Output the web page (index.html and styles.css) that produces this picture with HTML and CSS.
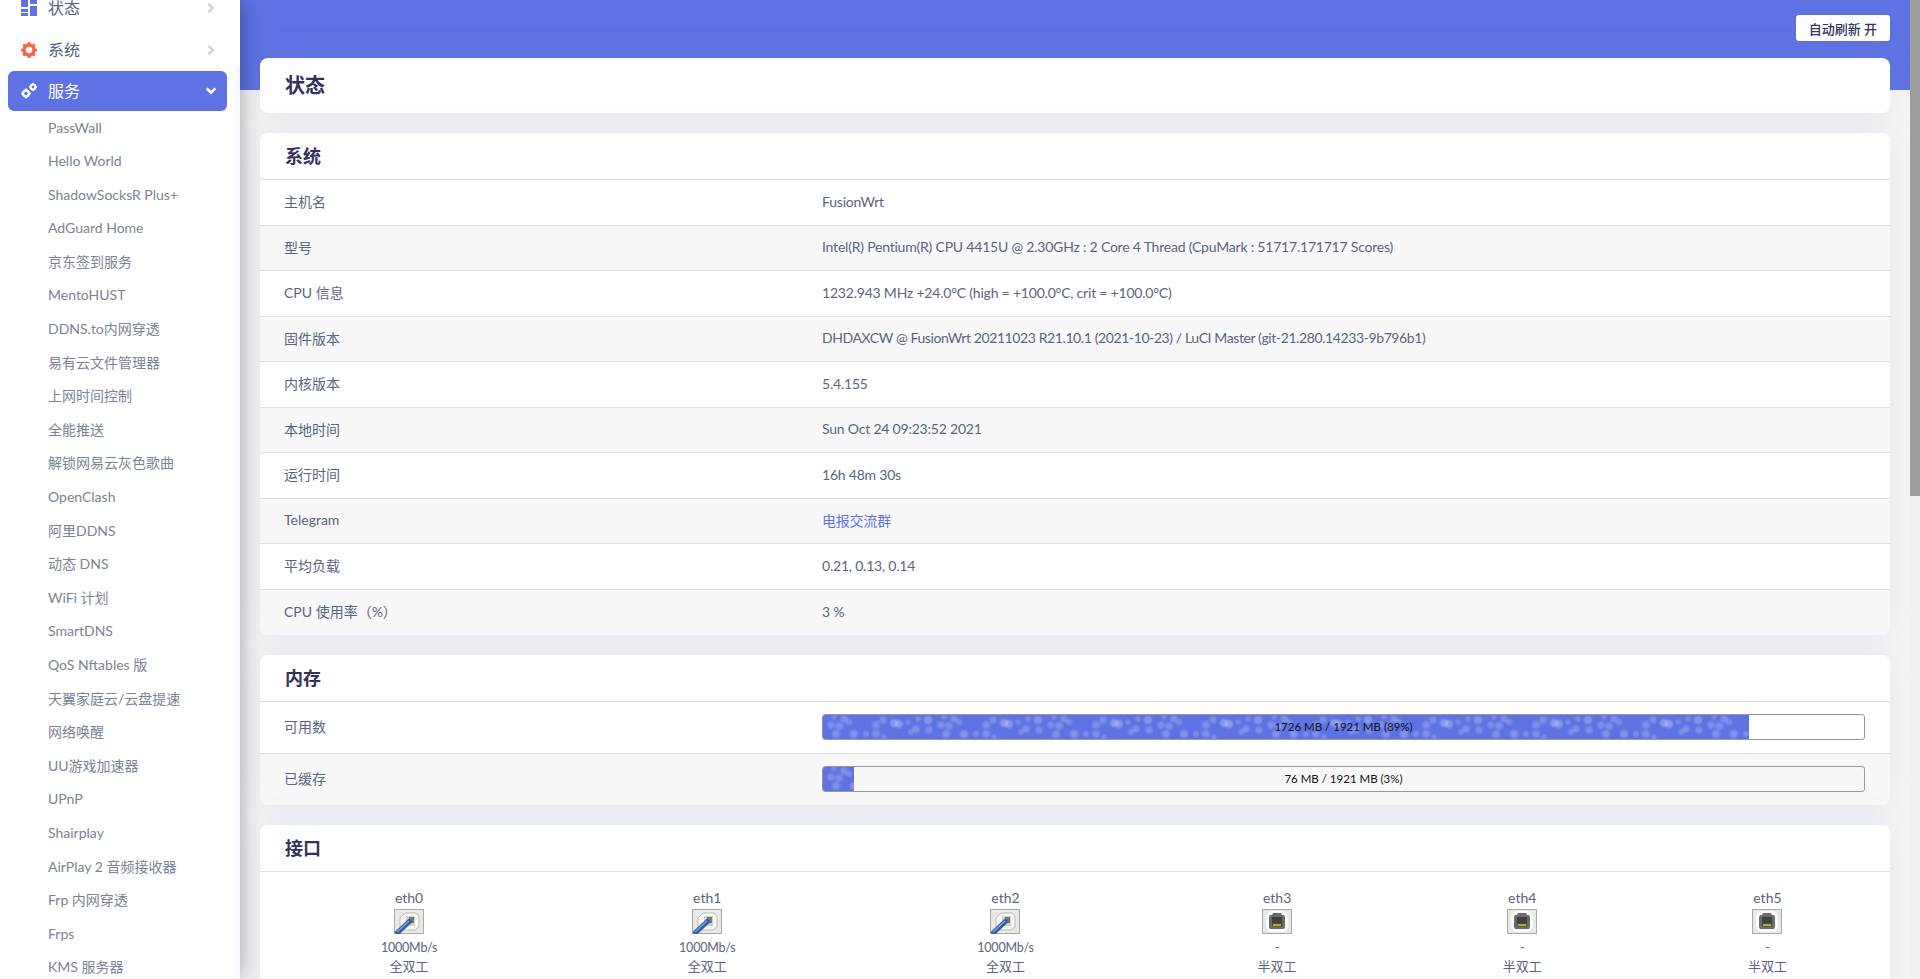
FILE: index.html
```html
<!DOCTYPE html>
<html lang="zh-CN">
<head>
    <meta charset="UTF-8">
    <title>状态 - LuCI</title>
    <link rel="stylesheet" href="styles.css">
</head>
<body>
    <aside class="sidebar">
        <ul class="menu">
            <li class="menu-item">
                <svg class="menu-icon" viewBox="0 0 16 16"><path fill="#5e72e4" d="M0 0h7v7H0zM9 0h7v4H9zM9 6h7v10H9zM0 9h7v3H0zM0 13h7v3H0z"/></svg>
                <span>状态</span>
                <svg class="arrow" viewBox="0 0 10 14"><path d="M2 2l5 5-5 5" fill="none" stroke="#ced4da" stroke-width="3"/></svg>
            </li>
            <li class="menu-item">
                <svg class="menu-icon" viewBox="0 0 16 16"><circle cx="8" cy="8" r="5" fill="none" stroke="#fb6340" stroke-width="3.4"/><path stroke="#fb6340" stroke-width="2.6" d="M8 0v3M8 13v3M0 8h3M13 8h3M2.300 2.300l2 2M11.700 11.700l2 2M2.300 13.700l2-2M11.700 4.300l2-2"/></svg>
                <span>系统</span>
                <svg class="arrow" viewBox="0 0 10 14"><path d="M2 2l5 5-5 5" fill="none" stroke="#ced4da" stroke-width="3"/></svg>
            </li>
            <li class="menu-item active">
                <svg class="menu-icon" viewBox="0 0 16 16"><circle cx="5" cy="10.500" r="3" fill="none" stroke="#fff" stroke-width="2.400"/><circle cx="12" cy="4" r="2.400" fill="none" stroke="#fff" stroke-width="2"/><path stroke="#fff" stroke-width="1.600" d="M5 5.500v2M5 13.500v2M0 10.500h2M8 10.500h2M12 0v1.500M12 6.500v1.500M8 4h1.500M14.500 4H16"/></svg>
                <span>服务</span>
                <svg class="arrow" viewBox="0 0 14 10"><path d="M2 2l5 5 5-5" fill="none" stroke="#fff" stroke-width="3"/></svg>
            </li>
        </ul>
        <ul class="submenu">
            <li>PassWall</li>
            <li>Hello World</li>
            <li>ShadowSocksR Plus+</li>
            <li>AdGuard Home</li>
            <li>京东签到服务</li>
            <li>MentoHUST</li>
            <li>DDNS.to内网穿透</li>
            <li>易有云文件管理器</li>
            <li>上网时间控制</li>
            <li>全能推送</li>
            <li>解锁网易云灰色歌曲</li>
            <li>OpenClash</li>
            <li>阿里DDNS</li>
            <li>动态 DNS</li>
            <li>WiFi 计划</li>
            <li>SmartDNS</li>
            <li>QoS Nftables 版</li>
            <li>天翼家庭云/云盘提速</li>
            <li>网络唤醒</li>
            <li>UU游戏加速器</li>
            <li>UPnP</li>
            <li>Shairplay</li>
            <li>AirPlay 2 音频接收器</li>
            <li>Frp 内网穿透</li>
            <li>Frps</li>
            <li>KMS 服务器</li>
        </ul>
    </aside>

    <main class="main">
        <div class="topbar">
            <button class="refresh-btn">自动刷新 开</button>
        </div>

        <div class="card page-title"><h2>状态</h2></div>

        <section class="card">
            <h3>系统</h3>
            <div class="row"><div class="key">主机名</div><div class="value">FusionWrt</div></div>
            <div class="row"><div class="key">型号</div><div class="value">Intel(R) Pentium(R) CPU 4415U @ 2.30GHz : 2 Core 4 Thread (CpuMark : 51717.171717 Scores)</div></div>
            <div class="row"><div class="key">CPU 信息</div><div class="value">1232.943 MHz +24.0°C (high = +100.0°C, crit = +100.0°C)</div></div>
            <div class="row"><div class="key">固件版本</div><div class="value value-tight">DHDAXCW @ FusionWrt 20211023 R21.10.1 (2021-10-23) / LuCI Master (git-21.280.14233-9b796b1)</div></div>
            <div class="row"><div class="key">内核版本</div><div class="value">5.4.155</div></div>
            <div class="row"><div class="key">本地时间</div><div class="value">Sun Oct 24 09:23:52 2021</div></div>
            <div class="row"><div class="key">运行时间</div><div class="value">16h 48m 30s</div></div>
            <div class="row"><div class="key">Telegram</div><div class="value"><a class="link" href="#">电报交流群</a></div></div>
            <div class="row"><div class="key">平均负载</div><div class="value">0.21, 0.13, 0.14</div></div>
            <div class="row"><div class="key">CPU 使用率（%）</div><div class="value">3 %</div></div>
        </section>

        <section class="card">
            <h3>内存</h3>
            <div class="row row-bar"><div class="key">可用数</div><div class="bar"><div class="bar-fill" style="width: 89%"></div><span>1726 MB / 1921 MB (89%)</span></div></div>
            <div class="row row-bar"><div class="key">已缓存</div><div class="bar"><div class="bar-fill" style="width: 3%"></div><span>76 MB / 1921 MB (3%)</span></div></div>
        </section>

        <section class="card">
            <h3>接口</h3>
            <div class="ports">
                <div class="port">
                    <div>eth0</div>
                    <svg class="port-icon" viewBox="0 0 30 25"><use href="#port-up"/></svg>
                    <div class="speed">1000Mb/s</div>
                    <div class="duplex">全双工</div>
                </div>
                <div class="port">
                    <div>eth1</div>
                    <svg class="port-icon" viewBox="0 0 30 25"><use href="#port-up"/></svg>
                    <div class="speed">1000Mb/s</div>
                    <div class="duplex">全双工</div>
                </div>
                <div class="port">
                    <div>eth2</div>
                    <svg class="port-icon" viewBox="0 0 30 25"><use href="#port-up"/></svg>
                    <div class="speed">1000Mb/s</div>
                    <div class="duplex">全双工</div>
                </div>
                <div class="port">
                    <div>eth3</div>
                    <svg class="port-icon" viewBox="0 0 30 25"><use href="#port-down"/></svg>
                    <div class="speed">-</div>
                    <div class="duplex">半双工</div>
                </div>
                <div class="port">
                    <div>eth4</div>
                    <svg class="port-icon" viewBox="0 0 30 25"><use href="#port-down"/></svg>
                    <div class="speed">-</div>
                    <div class="duplex">半双工</div>
                </div>
                <div class="port">
                    <div>eth5</div>
                    <svg class="port-icon" viewBox="0 0 30 25"><use href="#port-down"/></svg>
                    <div class="speed">-</div>
                    <div class="duplex">半双工</div>
                </div>
            </div>
        </section>
    </main>

    <div class="scrollbar"><div class="scrollbar-thumb"></div></div>

    <svg class="defs" width="0" height="0">
        <defs>
            <symbol id="port-up" viewBox="0 0 30 25">
                <rect x="0.500" y="0.500" width="29" height="24" fill="#e8e8e4" stroke="#a8a8a8"/>
                <path d="M6 9l5-5h11l3 3v11l-4 3H9l-3-3z" fill="#f6f6f4" stroke="#bdbdb8"/>
                <path d="M12 7h9v10h-9z" fill="#d2d2cd"/>
                <path d="M15 8h5v6h-5z" fill="#77777a"/>
                <path d="M2 25L17 11" stroke="#2f5fa8" stroke-width="5" fill="none"/>
                <path d="M3 23L15 12" stroke="#86a8d8" stroke-width="1.200" fill="none"/>
            </symbol>
            <symbol id="port-down" viewBox="0 0 30 25">
                <rect x="0.500" y="0.500" width="29" height="24" fill="#e8e8e4" stroke="#a8a8a8"/>
                <rect x="4" y="2" width="22" height="21" rx="6" fill="#fbfbfa"/>
                <path d="M11 4h8l1 2h2l1 2v10l-1 2H8l-1-2V8l1-2h2z" fill="#6a6e6b"/>
                <path d="M10 8h10v6H10z" fill="#3f4240"/>
                <path d="M10 14h10v3.500H10z" fill="#4a4a3c"/>
                <path d="M11 15h8v2h-8z" fill="#c2a82a"/>
            </symbol>
        </defs>
    </svg>
</body>
</html>
```

FILE: styles.css
```css
html, body {
    margin: 0;
    height: 100%;
    overflow: hidden;
}

body {
    display: flex;
    font-family: "Lato", "Noto Sans CJK SC", sans-serif;
    font-size: 14px;
    color: #5a6580;
    background-color: #f4f5f7;
}

ul {
    list-style: none;
    margin: 0;
    padding: 0;
}

.sidebar {
    width: 240px;
    flex-shrink: 0;
    height: 100vh;
    overflow: hidden;
    background-color: #fff;
    box-shadow: 0 0 20px rgba(0, 0, 0, 0.35);
    position: relative;
    z-index: 2;
}

.sidebar::after {
    content: "";
    position: absolute;
    top: 65px;
    right: 0;
    bottom: 0;
    width: 5px;
    background-color: #f8f9fc;
}

.menu {
    margin-top: -12px;
    padding: 0 8px;
}

.menu-item {
    display: flex;
    align-items: center;
    height: 40px;
    margin-bottom: 1.5px;
    padding-left: 13px;
    width: 219px;
    box-sizing: border-box;
    border-radius: 6px;
    font-size: 16px;
    color: #525f7f;
}

.menu-item span {
    padding-bottom: 2px;
}

.menu-item.active {
    background-color: #5e72e4;
    color: #fff;
}

.menu-icon {
    width: 16px;
    height: 16px;
    margin-right: 11px;
}

.menu-item .arrow {
    width: 12px;
    height: 12px;
    margin-left: auto;
    margin-right: 10px;
}

.submenu {
    margin-top: -2px;
}

.submenu li {
    height: 33.6px;
    line-height: 33.6px;
    padding-left: 48px;
    font-size: 14px;
    color: #7a8494;
    white-space: nowrap;
}

.main {
    flex: 1;
    height: 100vh;
    overflow: hidden;
    box-sizing: border-box;
    padding: 15px 20px 0;
    background: linear-gradient(#5e72e4 90px, #f4f5f7 90px);
}

.scrollbar {
    width: 10px;
    flex-shrink: 0;
    background-color: #f1f1f1;
}

.scrollbar-thumb {
    height: 496px;
    background-color: #9e9e9e;
}

.topbar {
    display: flex;
    justify-content: flex-end;
    height: 43px;
}

.refresh-btn {
    height: 26px;
    padding: 0 13px;
    border: none;
    border-radius: 3px;
    background-color: #fff;
    color: #32325d;
    font-family: inherit;
    font-size: 13px;
    font-weight: 500;
}

.card {
    margin-bottom: 20px;
    background-color: #fff;
    border-radius: 8px;
    box-shadow: 0 0 32px rgba(136, 152, 170, 0.15);
    overflow: hidden;
}

.page-title {
    height: 55px;
    display: flex;
    align-items: center;
    padding-left: 25px;
}

.page-title h2 {
    margin: 0 0 2px;
    font-size: 20px;
    color: #32325d;
}

.card h3 {
    margin: 0;
    height: 47px;
    line-height: 46px;
    padding-left: 25px;
    font-size: 18px;
    color: #32325d;
    border-bottom: 1px solid #dee2e6;
    box-sizing: border-box;
}

.row {
    display: flex;
    align-items: center;
    height: 45.5px;
    box-sizing: border-box;
    padding: 0 25px 2px 24px;
    border-bottom: 1px solid #dee2e6;
}

.row:nth-of-type(even) {
    background-color: #f8f8f8;
}

.row:last-child {
    border-bottom: none;
}

.key {
    flex-shrink: 0;
    width: 538px;
}

.value {
    letter-spacing: -0.21px;
}

.value-tight {
    letter-spacing: -0.4px;
}

.link {
    color: #5e72e4;
    text-decoration: none;
}

.row-bar {
    height: 51.5px;
    padding-bottom: 0;
}

.row-bar .key {
    padding-bottom: 2px;
}

.bar {
    position: relative;
    flex: 1;
    height: 26px;
    box-sizing: border-box;
    border: 1px solid #999;
    border-radius: 3px;
    overflow: hidden;
}

.bar span {
    position: absolute;
    top: 0;
    left: 0;
    right: 0;
    text-align: center;
    line-height: 24px;
    font-size: 11.5px;
    color: #111;
}

.bar-fill {
    height: 100%;
    background-color: #5e72e4;
    background-size: 110px 26px;
    background-image:
        radial-gradient(circle at 8px 10px, rgba(255,255,255,.2) 2px, transparent 5px),
        radial-gradient(circle at 16px 11px, rgba(255,255,255,.2) 2px, transparent 5.5px),
        radial-gradient(circle at 13px 19px, rgba(255,255,255,.22) 2px, transparent 5.5px),
        radial-gradient(circle at 21px 4px, rgba(255,255,255,.2) 2px, transparent 5px),
        radial-gradient(circle at 26px 7px, rgba(255,255,255,.16) 2px, transparent 4.5px),
        radial-gradient(circle at 31px 19px, rgba(255,255,255,.25) 2px, transparent 5.5px),
        radial-gradient(circle at 43px 19px, rgba(255,255,255,.18) 2px, transparent 4px),
        radial-gradient(circle at 53px 10px, rgba(255,255,255,.2) 2px, transparent 5.5px),
        radial-gradient(circle at 60px 5px, rgba(255,255,255,.2) 2px, transparent 5px),
        radial-gradient(circle at 53px 19px, rgba(255,255,255,.2) 2px, transparent 5.5px),
        radial-gradient(circle at 71px 8px, rgba(255,255,255,.26) 2.5px, transparent 5.5px),
        radial-gradient(circle at 76px 9px, rgba(255,255,255,.26) 2.5px, transparent 5.5px),
        radial-gradient(circle at 85px 7px, rgba(255,255,255,.16) 1.5px, transparent 4px),
        radial-gradient(circle at 93px 14px, rgba(255,255,255,.22) 2px, transparent 5px),
        radial-gradient(circle at 95px 4px, rgba(255,255,255,.18) 1.5px, transparent 4px),
        radial-gradient(circle at 105px 5px, rgba(255,255,255,.25) 2.5px, transparent 5.5px),
        radial-gradient(circle at 106px 15px, rgba(255,255,255,.2) 2px, transparent 5px),
        radial-gradient(circle at 88px 17px, rgba(255,255,255,.18) 1.5px, transparent 4px),
        radial-gradient(circle at 61px 22px, rgba(255,255,255,.16) 1.5px, transparent 4px),
        radial-gradient(circle at 11px 2px, rgba(255,255,255,.16) 1.5px, transparent 4px);
}

.ports {
    display: grid;
    grid-template-columns: repeat(3, 298fr) repeat(3, 245fr);
    padding: 16px 0 40px;
}

.port {
    text-align: center;
    line-height: 19px;
}

.port-icon {
    display: block;
    width: 30px;
    height: 25px;
    margin: 2px auto 3px;
}

.speed {
    font-size: 12.5px;
    letter-spacing: -0.2px;
    line-height: 20px;
    padding-top: 1px;
    margin-bottom: -1px;
}

.duplex {
    font-size: 13px;
}

.defs {
    position: absolute;
}
```
